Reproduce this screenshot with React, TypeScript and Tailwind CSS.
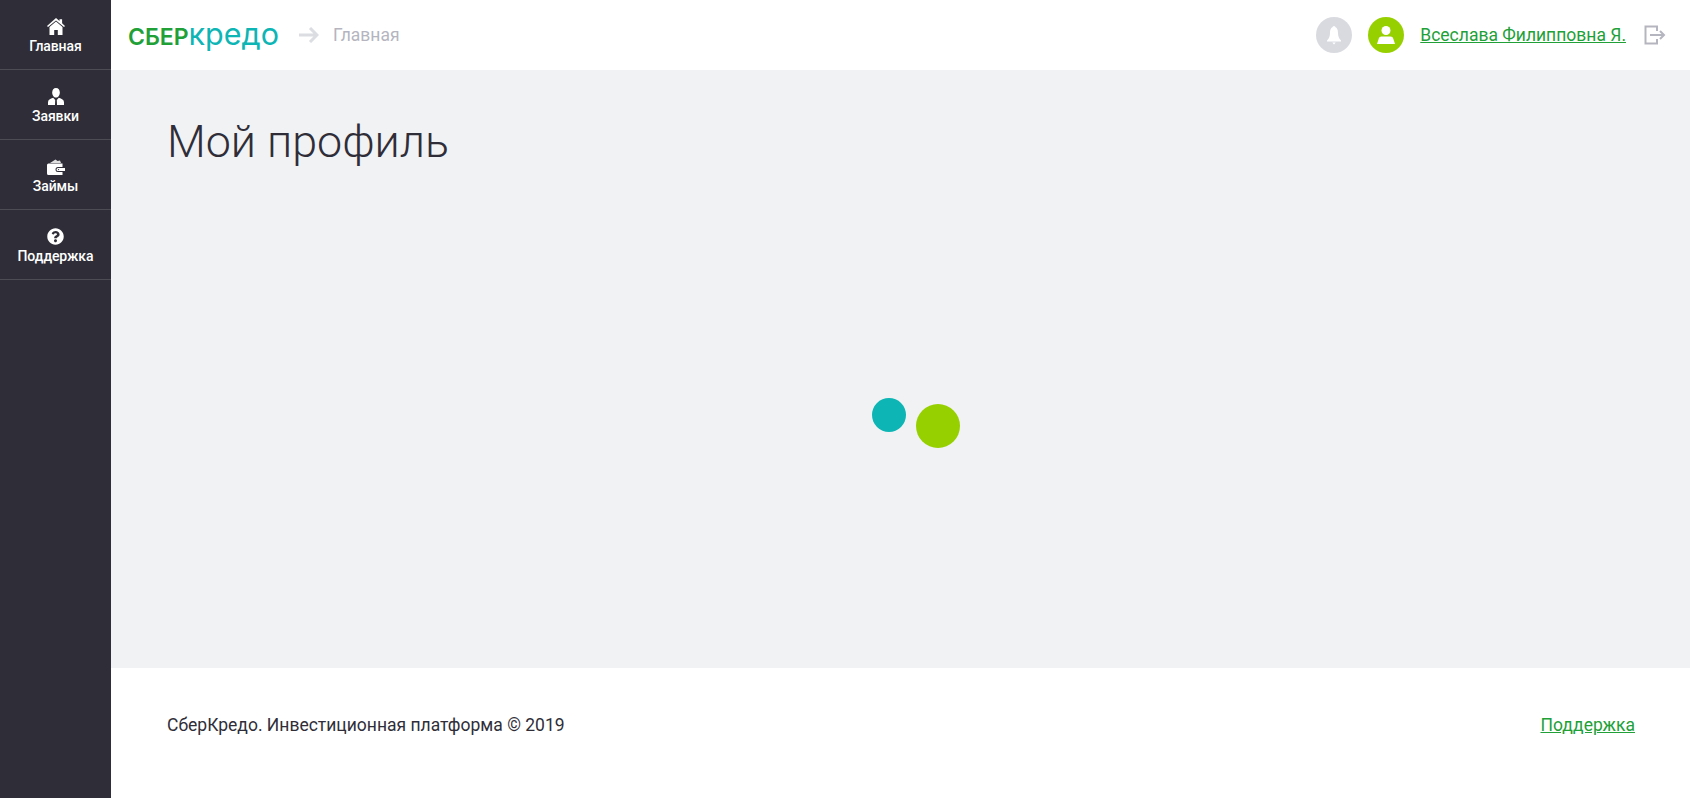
import { FaQuestionCircle } from "react-icons/fa";

const HomeIcon = () => (
  <svg width="18" height="17" viewBox="0 0 18 17" fill="currentColor">
    <path d="M9 0 12.5 3V1.2h2.6v4L18 8l-1 1.1L9 2.4 1 9.1 0 8z" />
    <path d="M9 3.6 15.5 9v8h-4.7v-5H7.2v5H2.5V9z" />
  </svg>
);

const ClientIcon = () => (
  <svg width="16" height="17" viewBox="0 0 16 17" fill="currentColor">
    <path d="M8 0c2.4 0 3.8 1.9 3.8 4.4C11.800 7 10.200 9.600 8 9.600S4.200 7 4.200 4.400C4.200 1.900 5.600 0 8 0z" />
    <path d="M5.200 9.800 7.200 12 7 17H0v-2.800c0-2.300 2.300-3.500 5.200-4.400zM10.800 9.800c2.900.9 5.200 2.100 5.200 4.400V17H9l-.2-5z" />
  </svg>
);

const WalletIcon = () => (
  <svg width="18" height="16" viewBox="0 0 18 16" fill="currentColor">
    <path d="M3 4 8.500.5l2 1.500 2.500-.5L14 4z" opacity="0.85" />
    <path d="M1.500 4.500H15.500V8H11a2.500 2.500 0 0 0 0 5h4.500v3h-14A1.500 1.500 0 0 1 0 14.500V6a1.500 1.500 0 0 1 1.500-1.500z" />
    <path d="M11 9h7v3h-7a1.500 1.500 0 0 1 0-3zm.6 1a.6.6 0 1 0 0 1.200.6.6 0 0 0 0-1.200z" fillRule="evenodd" />
  </svg>
);

const navItems = [
  { label: "Главная", icon: <HomeIcon /> },
  { label: "Заявки", icon: <ClientIcon /> },
  { label: "Займы", icon: <WalletIcon /> },
  { label: "Поддержка", icon: <FaQuestionCircle size={17} /> },
];

export default function App() {
  return (
    <div className="flex h-[798px] font-['Roboto',sans-serif] text-[#2f2e38] overflow-hidden">
      <aside className="w-[111px] shrink-0 bg-[#2f2e38]">
        {navItems.map((item) => (
          <a key={item.label} className="flex flex-col items-center h-[70px] border-b border-[#4d4c55] text-white">
            <div className="h-[17px] mt-[18px] flex items-center justify-center">{item.icon}</div>
            <span className="text-[14px] leading-[18px] font-medium mt-[2px] tracking-[-0.1px]">{item.label}</span>
          </a>
        ))}
      </aside>

      <div className="flex-1 flex flex-col relative">
        <header className="h-[70px] bg-white flex items-center pl-[17px] pr-[24px]">
          <div className="flex items-baseline leading-none font-['Inter',sans-serif] mt-[-1px]">
            <span className="text-[#21a038] font-semibold text-[23px]">СБЕР</span>
            <span className="text-[#0db5b5] font-normal text-[30.5px]">кредо</span>
          </div>
          <svg className="ml-[20px]" width="20" height="16" viewBox="0 0 20 16" fill="none" stroke="#dcdde2" strokeWidth="3">
            <path d="M0 8h18M11 1l7 7-7 7" />
          </svg>
          <span className="ml-[14px] text-[#b5b5c0] text-[17.5px]">Главная</span>

          <div className="ml-auto flex items-center">
            <div className="w-9 h-9 rounded-full bg-[#d9dae0] flex items-center justify-center">
              <svg width="14" height="19" viewBox="0 0 14 19" fill="white">
                <circle cx="7" cy="1.500" r="1.500" />
                <path d="M7 1C10.200 1 11 4 11 7c0 3.500 1 5.500 3 7.500V15.500H0V14.500C2 12.500 3 10.500 3 7c0-3 .8-6 4-6z" />
                <path d="M5.300 16.500h3.400L7 18.500z" />
              </svg>
            </div>
            <div className="ml-[16px] w-9 h-9 rounded-full bg-[#97d000] flex items-center justify-center">
              <svg width="18" height="18" viewBox="0 0 18 18" fill="white">
                <circle cx="9" cy="4.500" r="4.500" />
                <path d="M4.500 10.500h9c1.500 0 2.300.8 2.800 2.200L18 18H0l1.700-5.300c.5-1.400 1.300-2.200 2.800-2.200z" />
              </svg>
            </div>
            <a className="ml-[16px] text-[17.5px] text-[#21a038] underline">Всеслава Филипповна Я.</a>
            <svg className="ml-[18px]" width="22" height="20" viewBox="0 0 22 20" fill="none" stroke="#b5b5c0" strokeWidth="2">
              <path d="M13 6V1.500H1.500v17H13V14M6 10h14M16 6l4 4-4 4" />
            </svg>
          </div>
        </header>

        <main className="flex-1 bg-[#f1f2f4] px-[56px] pt-[44px]">
          <h1 className="text-[44.800px] leading-[56px] font-light">Мой профиль</h1>
        </main>

        <footer className="h-[130px] bg-white flex justify-between pl-[56px] pr-[55px] pt-[45px] text-[17.5px] leading-[24px]">
          <span>СберКредо. Инвестиционная платформа © 2019</span>
          <a className="text-[#21a038] underline">Поддержка</a>
        </footer>

        {/* loader */}
        <div className="absolute left-[761px] top-[398px] w-[34px] h-[34px] rounded-full bg-[#0db5b5]" />
        <div className="absolute left-[805px] top-[404px] w-[44px] h-[44px] rounded-full bg-[#97d000]" />
      </div>
    </div>
  );
}
